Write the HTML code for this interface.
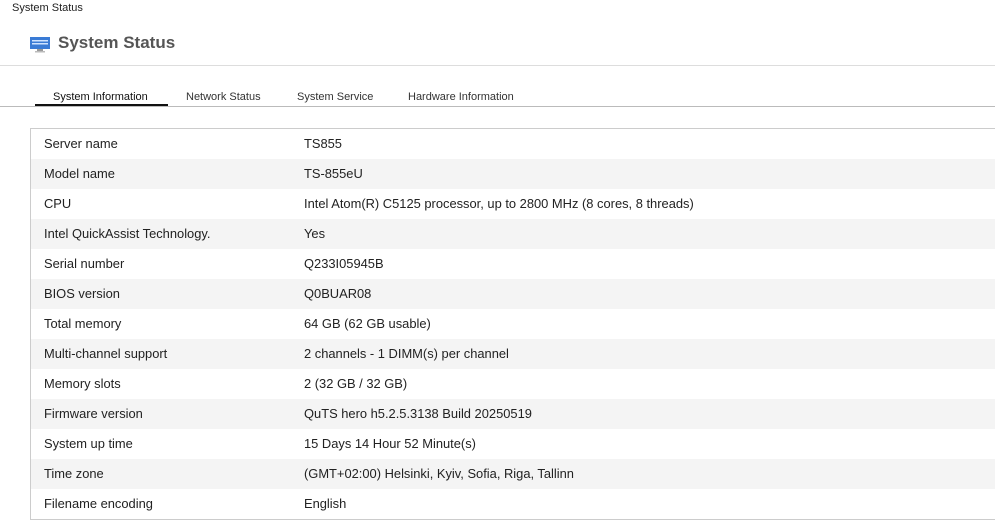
<!DOCTYPE html>
<html><head><style>
body{margin:0;width:995px;height:522px;overflow:hidden;background:#fff;font-family:"Liberation Sans",sans-serif;color:#222;position:relative}
.tb{position:absolute;left:12px;top:2px;font-size:11px;color:#222}
.hdr{position:absolute;left:58px;top:33px;font-size:17px;font-weight:bold;color:#555}
.ic{position:absolute;left:30px;top:37px}
.l1{position:absolute;left:0;top:65px;width:995px;height:1px;background:#ddd}
.tabs{position:absolute;top:91px;left:0;font-size:11px;color:#333}
.tabs span{position:absolute;white-space:nowrap}
.ul{position:absolute;left:35px;top:104px;width:133px;height:2px;background:#111}
.l2{position:absolute;left:0;top:106px;width:995px;height:1px;background:#bbb}
.tbl{position:absolute;left:30px;top:128px;width:970px;border:1px solid #ccc;border-right:none}
.r{height:30px;line-height:30px;font-size:12.9px;position:relative}
.r:nth-child(even){background:#f4f4f4}
.r b{font-weight:normal;position:absolute;left:13px}
.r i{font-style:normal;position:absolute;left:273px}
</style></head><body>
<div class="tb">System Status</div>
<svg class="ic" width="20" height="16" viewBox="0 0 20 16"><rect x="0" y="0" width="20" height="12" fill="#3a7bd5"/><rect x="2" y="3" width="16" height="1.5" fill="#cfe3ff"/><rect x="2" y="6" width="16" height="1.5" fill="#cfe3ff"/><rect x="7" y="12" width="6" height="2" fill="#999"/><rect x="5" y="14" width="10" height="1.5" fill="#bbb"/></svg>
<div class="hdr">System Status</div>
<div class="l1"></div>
<div class="tabs"><span style="left:53px;color:#111">System Information</span><span style="left:186px">Network Status</span><span style="left:297px">System Service</span><span style="left:408px">Hardware Information</span></div>
<div class="ul"></div><div class="l2"></div>
<div class="tbl">
<div class="r"><b>Server name</b><i>TS855</i></div>
<div class="r"><b>Model name</b><i>TS-855eU</i></div>
<div class="r"><b>CPU</b><i>Intel Atom(R) C5125 processor, up to 2800 MHz (8 cores, 8 threads)</i></div>
<div class="r"><b>Intel QuickAssist Technology.</b><i>Yes</i></div>
<div class="r"><b>Serial number</b><i>Q233I05945B</i></div>
<div class="r"><b>BIOS version</b><i>Q0BUAR08</i></div>
<div class="r"><b>Total memory</b><i>64 GB (62 GB usable)</i></div>
<div class="r"><b>Multi-channel support</b><i>2 channels - 1 DIMM(s) per channel</i></div>
<div class="r"><b>Memory slots</b><i>2 (32 GB / 32 GB)</i></div>
<div class="r"><b>Firmware version</b><i>QuTS hero h5.2.5.3138 Build 20250519</i></div>
<div class="r"><b>System up time</b><i>15 Days 14 Hour 52 Minute(s)</i></div>
<div class="r"><b>Time zone</b><i>(GMT+02:00) Helsinki, Kyiv, Sofia, Riga, Tallinn</i></div>
<div class="r"><b>Filename encoding</b><i>English</i></div>
</div>
</body></html>
